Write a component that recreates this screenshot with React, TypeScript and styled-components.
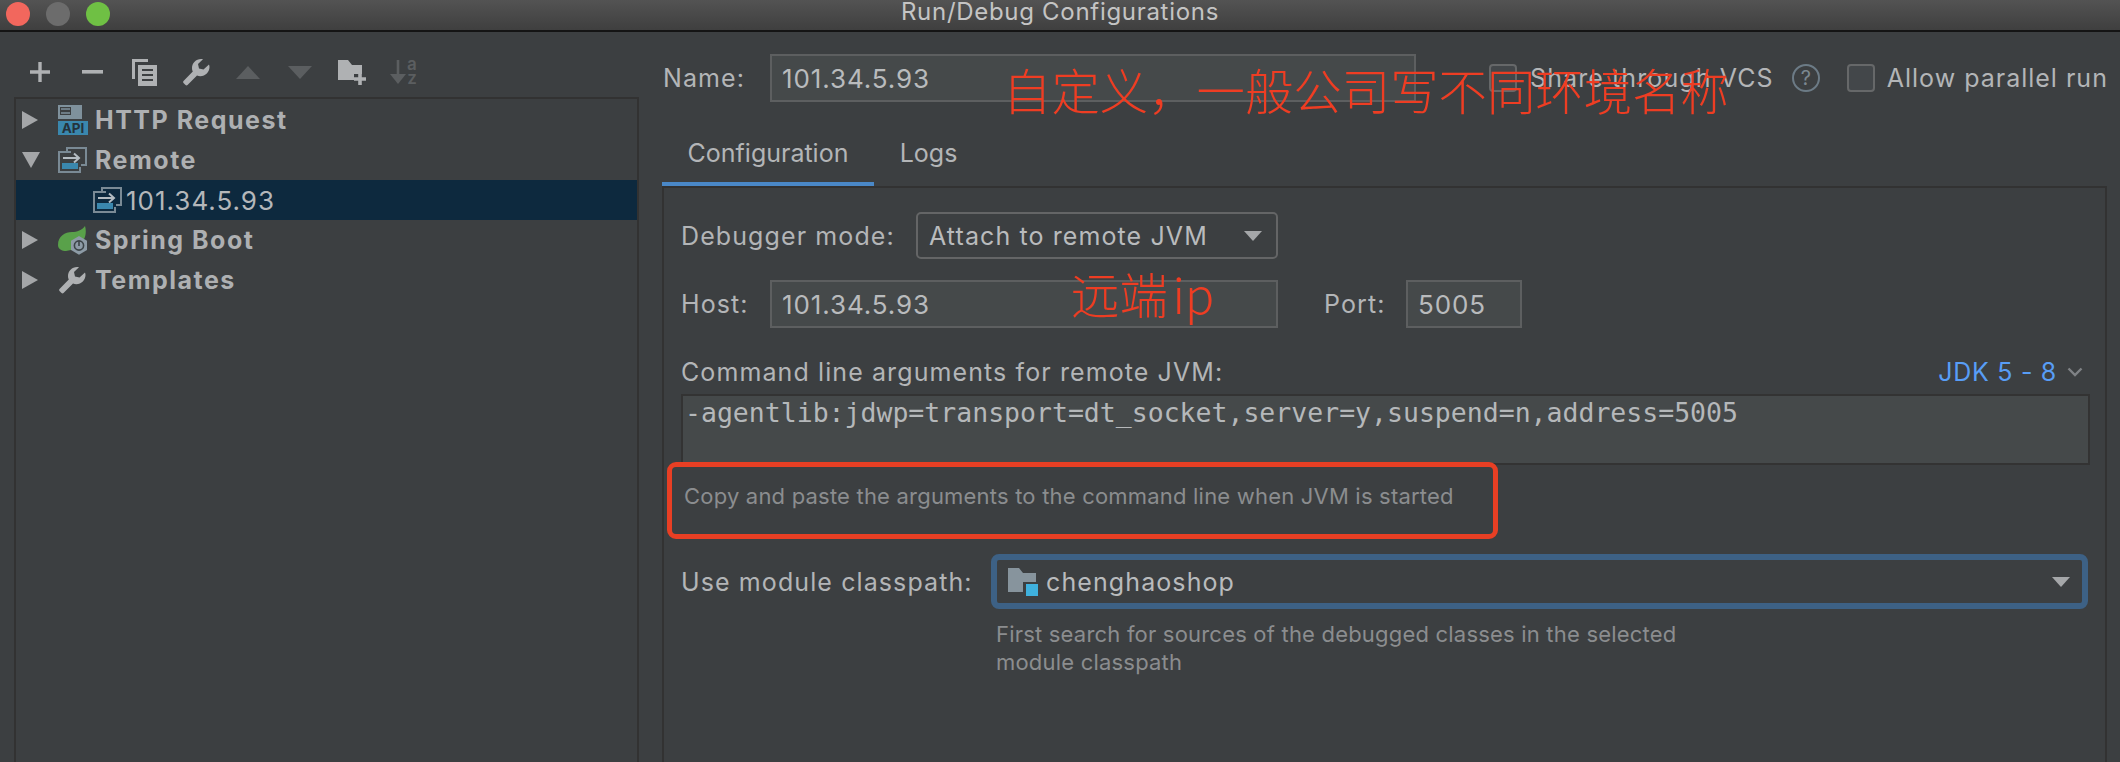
import React from "react";
import styled, { createGlobalStyle } from "styled-components";

const Global = createGlobalStyle`
  html, body { margin: 0; padding: 0; background: #3c3f41; }
  * { box-sizing: border-box; }
`;

const UI = `Inter, "Liberation Sans", "Noto Sans CJK SC", sans-serif`;
const CJK = `"Noto Sans CJK SC", Inter, sans-serif`;

const Window = styled.div`
  position: relative;
  width: 2120px;
  height: 762px;
  overflow: hidden;
  background: #3c3f41;
  font-family: ${UI};
  color: #b3b5b7;
  display: flex;
  flex-direction: column;
`;
const TitleBar = styled.header`
  height: 32px;
  flex: none;
  display: grid;
  grid-template-columns: 1fr auto 1fr;
  align-items: center;
  background: linear-gradient(#535353, #3f3f3f);
  border-bottom: 2px solid #141414;
  overflow: hidden;
`;
const Lights = styled.div`
  display: flex;
  gap: 16px;
  padding-left: 6px;
  margin-top: -2px;
`;
const Light = styled.span<{ $c: string }>`
  width: 24px;
  height: 24px;
  border-radius: 50%;
  background: ${(p) => p.$c};
`;
const Title = styled.h1`
  margin: -6px 0 0;
  font-size: 24px;
  line-height: 22px;
  letter-spacing: 0.7px;
  font-weight: 400;
  color: #c4c4c4;
  white-space: nowrap;
`;
const Body = styled.div`
  flex: 1;
  display: flex;
  min-height: 0;
`;
const Sidebar = styled.aside`
  width: 639px;
  flex: none;
  padding-left: 14px;
  display: flex;
  flex-direction: column;
`;
const Toolbar = styled.div`
  height: 65px;
  flex: none;
  display: flex;
  padding: 24px 0 0 0;
`;
const ToolSlot = styled.span`
  width: 52px;
  height: 32px;
  display: flex;
  align-items: center;
  justify-content: center;
  svg { display: block; overflow: visible; }
`;
const Tree = styled.div`
  flex: 1;
  border: 2px solid #323232;
  border-bottom: 0;
  padding-top: 1px;
`;
const Row = styled.div<{ $selected?: boolean; $leaf?: boolean }>`
  height: 40px;
  display: flex;
  align-items: center;
  padding-left: ${(p) => (p.$leaf ? "77px" : "6px")};
  background: ${(p) => (p.$selected ? "#0d293e" : "transparent")};
`;
const Caret = styled.span`
  width: 36px;
  display: flex;
  flex: none;
`;
const IconSlot = styled.span`
  width: 37px;
  flex: none;
  display: flex;
  svg { display: block; }
`;
const Group = styled.span`
  font-size: 25px;
  font-weight: 700;
  letter-spacing: 1.5px;
  color: #aeb0b2;
  white-space: nowrap;
`;
const Leaf = styled.span`
  font-size: 26px;
  margin-left: 4px;
  letter-spacing: 1px;
  color: #b4b7ba;
`;
const Main = styled.main`
  flex: 1;
  min-width: 0;
  padding: 22px 0 0 23px;
  display: flex;
  flex-direction: column;
`;
const NameRow = styled.div`
  display: flex;
  align-items: center;
  height: 48px;
  padding-left: 1px;
`;
const Label = styled.label<{ $w?: number; $ml?: number }>`
  font-size: 25px;
  white-space: nowrap;
  color: #b3b5b7;
  letter-spacing: 1.1px;
  ${(p) => (p.$w ? `width: ${p.$w}px; flex: none;` : "")}
  ${(p) => (p.$ml ? `margin-left: ${p.$ml}px;` : "")}
`;
const Field = styled.div<{ $w: number }>`
  width: ${(p) => p.$w}px;
  height: 48px;
  flex: none;
  background: #45494a;
  border: 2px solid #5d5f60;
  display: flex;
  align-items: center;
  padding-left: 10px;
  font-size: 26px;
  letter-spacing: 0.9px;
  color: #b9bbbd;
`;
const CheckBox = styled.span<{ $ml: number }>`
  width: 28px;
  height: 28px;
  flex: none;
  margin-left: ${(p) => p.$ml}px;
  border: 2px solid #666869;
  border-radius: 4px;
  background: #43474a;
`;
const CheckText = styled.span<{ $ml: number; $ls?: number }>`
  margin-left: ${(p) => p.$ml}px;
  font-size: 25px;
  letter-spacing: ${(p) => p.$ls ?? 1.1}px;
  color: #b3b5b7;
  white-space: nowrap;
`;
const Help = styled.span`
  width: 28px;
  height: 28px;
  flex: none;
  margin-left: 18px;
  border: 2px solid #6c7b86;
  border-radius: 50%;
  color: #7b8790;
  font-size: 20px;
  line-height: 24px;
  text-align: center;
`;
const TabBar = styled.div`
  margin-top: 32px;
  height: 54px;
  display: flex;
  flex: none;
`;
const Tab = styled.div<{ $active?: boolean; $w: number }>`
  width: ${(p) => p.$w}px;
  height: 54px;
  text-align: center;
  font-size: 25px;
  line-height: 38px;
  color: #b3b5b7;
  border-bottom: ${(p) => (p.$active ? "6px solid #4a88c7" : "0")};
`;
const Panel = styled.section`
  flex: 1;
  margin: -2px 13px 0 0;
  border: 2px solid #323232;
  border-bottom: 0;
  padding: 24px 0 0 17px;
  display: flex;
  flex-direction: column;
`;
const FormRow = styled.div<{ $mt?: number }>`
  display: flex;
  align-items: center;
  margin-top: ${(p) => p.$mt ?? 0}px;
  flex: none;
`;
const Combo = styled.div<{ $w: number }>`
  width: ${(p) => p.$w}px;
  height: 47px;
  flex: none;
  border: 2px solid #646566;
  border-radius: 5px;
  display: flex;
  align-items: center;
  padding: 0 14px 0 11px;
  font-size: 25px;
  letter-spacing: 1.1px;
  color: #b9bbbd;
  justify-content: space-between;
`;
const ComboArrow = styled.i`
  width: 0;
  height: 0;
  border-left: 9px solid transparent;
  border-right: 9px solid transparent;
  border-top: 10px solid #a5a7a9;
`;
const ArgsHead = styled.div`
  margin-top: 28px;
  display: flex;
  justify-content: space-between;
  align-items: center;
  height: 32px;
  padding-right: 22px;
  flex: none;
`;
const Jdk = styled.span`
  display: flex;
  align-items: center;
  gap: 10px;
  font-size: 25px;
  letter-spacing: 0.7px;
  color: #589df6;
`;
const Args = styled.div`
  margin-top: 6px;
  width: 1409px;
  height: 71px;
  flex: none;
  background: #45494a;
  border: 2px solid #333;
  padding: 0 0 0 2px;
  font-family: "DejaVu Sans Mono", "Liberation Mono", monospace;
  font-size: 26.5px;
  line-height: 34px;
  color: #b5b8ba;
  white-space: nowrap;
`;
const Hint = styled.p<{ $ml?: number; $mt: number }>`
  margin: ${(p) => p.$mt}px 0 0 ${(p) => p.$ml ?? 3}px;
  font-size: 22px;
  letter-spacing: 0.2px;
  line-height: 28px;
  color: #8b8d8f;
  width: ${(p) => (p.$ml ? "720px" : "auto")};
  flex: none;
`;
const FocusCombo = styled.div`
  width: 1097px;
  height: 55px;
  flex: none;
  margin-left: 20px;
  border: 6px solid #3d6185;
  border-radius: 8px;
  display: flex;
  align-items: center;
  padding: 0 12px 0 11px;
`;
const ComboText = styled.span`
  margin-left: 8px;
  font-size: 25px;
  letter-spacing: 1.1px;
  color: #b9bbbd;
  flex: 1;
`;
const RedNote = styled.div<{ $x: number; $y: number; $ws?: number }>`
  position: absolute;
  left: ${(p) => p.$x}px;
  top: ${(p) => p.$y}px;
  font-family: ${CJK};
  font-size: 48.4px;
  font-weight: 300;
  line-height: 60px;
  color: #ee3d23;
  white-space: nowrap;
  word-spacing: ${(p) => p.$ws ?? 0}px;
`;
const RedBox = styled.div`
  position: absolute;
  left: 667px;
  top: 462px;
  width: 831px;
  height: 77px;
  border: 5px solid #e83f24;
  border-radius: 9px;
`;

const Tri = ({ d, c, w, h }: { d: string; c: string; w: number; h: number }) => (
  <svg width={w} height={h} viewBox={`0 0 ${w} ${h}`}>
    <path d={d} fill={c} />
  </svg>
);

const wrench =
  "M19 1C14 1 10 5 10 10c0 1.5.3 2.5.8 3.6L1.5 23c-.5.6-.5 1.4 0 2l2 2c.6.5 1.5.5 2 0l9.5-9.5c1 .5 2.2.7 3.3.7 5.2 0 9.2-4.2 9.2-9.2 0-1-.2-1.8-.5-2.6l-5.5 5.1-4.5-1-1-4.5 5-4.8C20.4 1.05 19.7 1 19 1Z";

const Wrench = ({ s = 28, c = "#afb1b3" }: { s?: number; c?: string }) => (
  <svg width={s} height={s} viewBox="0 0 28 28">
    <path d={wrench} fill={c} />
  </svg>
);

const RemoteIcon = () => (
  <svg width="29" height="26" viewBox="0 0 29 26">
    <path d="M9 5V1h19v17h-5" fill="none" stroke="#7a8a95" strokeWidth="2" />
    <path d="M13 5H1v20h21v-5" fill="none" stroke="#7a8a95" strokeWidth="2" />
    <rect x="4" y="16" width="16" height="6" fill="#3a87ad" />
    <path d="M5 11h15M16 6.5l5 4.5-5 4.5" fill="none" stroke="#b4bcc2" strokeWidth="2" />
  </svg>
);

const ApiIcon = () => (
  <svg width="30" height="30" viewBox="0 0 30 30">
    <rect x="0" y="0" width="24" height="14" fill="#7f919c" />
    <path d="M2 2h11v8H2z" fill="#3c3f41" />
    <path d="M3 4h9M3 8h9" stroke="#7f919c" strokeWidth="1.6" />
    <rect x="0" y="16" width="30" height="14" fill="#3a87ad" />
    <text x="15" y="28" textAnchor="middle" fontFamily="Inter, sans-serif" fontWeight="700" fontSize="13.5" fill="#25323b">
      API
    </text>
  </svg>
);

const SpringIcon = () => (
  <svg width="30" height="29" viewBox="0 0 30 29">
    <path d="M0 19C0 10 7 6 14 6c5 0 10-2 13-6 2 7 0 13-3 16l-11 8-5 1C4 25 0 23 0 19Z" fill="#59a14a" />
    <path d="M21 10l8 4.7v9.3l-8 4.8-8-4.8v-9.3z" fill="#8d9ba6" />
    <circle cx="21" cy="19.5" r="4.6" fill="none" stroke="#3c4448" strokeWidth="1.6" />
    <path d="M21 15v5" stroke="#3c4448" strokeWidth="1.6" />
  </svg>
);

const ModuleFolder = () => (
  <svg width="30" height="28" viewBox="0 0 30 28">
    <path d="M0 0h11l4 5h13v19H0z" fill="#87949d" />
    <rect x="15" y="14" width="15" height="14" fill="#3c3f41" />
    <rect x="18" y="16" width="12" height="12" fill="#3fb1de" />
  </svg>
);

const tools = [
  <svg key="plus" width="22" height="22" viewBox="0 0 22 22">
    <path d="M11 1v20M1 11h20" stroke="#afb1b3" strokeWidth="3.4" />
  </svg>,
  <svg key="minus" width="21" height="4" viewBox="0 0 21 4">
    <rect width="21" height="3.6" fill="#afb1b3" />
  </svg>,
  <svg key="copy" width="25" height="27" viewBox="0 0 25 27">
    <path d="M0 0h16v3H3v17H0z" fill="#afb1b3" />
    <path d="M6 6h19v21H6z" fill="#afb1b3" />
    <path d="M10 11h11M10 16h11M10 21h11" stroke="#3c3f41" strokeWidth="2" />
  </svg>,
  <Wrench key="wrench" />,
  <Tri key="up" w={24} h={13} d="M12 0l12 13H0z" c="#5b5e60" />,
  <Tri key="down" w={24} h={13} d="M0 0h24L12 13z" c="#5b5e60" />,
  <svg key="folder" width="29" height="25" viewBox="0 0 29 25">
    <path d="M0 0h10l4 5h10v9h-8v6H0z" fill="#afb1b3" />
    <path d="M22 13v12M16 19h12" stroke="#afb1b3" strokeWidth="3.6" />
  </svg>,
  <svg key="sort" width="28" height="25" viewBox="0 0 28 25">
    <path d="M8 0v20" stroke="#5b5e60" strokeWidth="2.6" />
    <path d="M0 14h16L8 24z" fill="#5b5e60" />
    <text x="22" y="10" textAnchor="middle" fontFamily="Inter, sans-serif" fontWeight="600" fontSize="17" fill="#5b5e60">a</text>
    <text x="22" y="24" textAnchor="middle" fontFamily="Inter, sans-serif" fontWeight="600" fontSize="17" fill="#5b5e60">z</text>
  </svg>,
];

const Right = () => <Tri w={16} h={18} d="M0 0l16 9-16 9z" c="#a4a6a8" />;
const Down = () => <Tri w={18} h={16} d="M0 0h18L9 16z" c="#a4a6a8" />;

export default function App() {
  return (
    <Window>
      <Global />
      <TitleBar>
        <Lights>
          <Light $c="#f2675d" />
          <Light $c="#6c6c6c" />
          <Light $c="#6fc044" />
        </Lights>
        <Title>Run/Debug Configurations</Title>
        <span />
      </TitleBar>
      <Body>
        <Sidebar>
          <Toolbar>
            {tools.map((t, i) => (
              <ToolSlot key={i}>{t}</ToolSlot>
            ))}
          </Toolbar>
          <Tree>
            <Row>
              <Caret><Right /></Caret>
              <IconSlot><ApiIcon /></IconSlot>
              <Group>HTTP Request</Group>
            </Row>
            <Row>
              <Caret><Down /></Caret>
              <IconSlot><RemoteIcon /></IconSlot>
              <Group>Remote</Group>
            </Row>
            <Row $selected $leaf>
              <RemoteIcon />
              <Leaf>101.34.5.93</Leaf>
            </Row>
            <Row>
              <Caret><Right /></Caret>
              <IconSlot><SpringIcon /></IconSlot>
              <Group>Spring Boot</Group>
            </Row>
            <Row>
              <Caret><Right /></Caret>
              <IconSlot><Wrench /></IconSlot>
              <Group>Templates</Group>
            </Row>
          </Tree>
        </Sidebar>
        <Main>
          <NameRow>
            <Label $w={107}>Name:</Label>
            <Field $w={646}>101.34.5.93</Field>
            <CheckBox $ml={73} />
            <CheckText $ml={13}>Share through VCS</CheckText>
            <Help>?</Help>
            <CheckBox $ml={27} />
            <CheckText $ml={12} $ls={1}>Allow parallel run</CheckText>
          </NameRow>
          <TabBar>
            <Tab $active $w={212}>Configuration</Tab>
            <Tab $w={109}>Logs</Tab>
          </TabBar>
          <Panel>
            <FormRow>
              <Label $w={235}>Debugger mode:</Label>
              <Combo $w={362}>
                Attach to remote JVM
                <ComboArrow />
              </Combo>
            </FormRow>
            <FormRow $mt={21}>
              <Label $w={89}>Host:</Label>
              <Field $w={508}>101.34.5.93</Field>
              <Label $w={82} $ml={46}>Port:</Label>
              <Field $w={116}>5005</Field>
            </FormRow>
            <ArgsHead>
              <Label>Command line arguments for remote JVM:</Label>
              <Jdk>
                JDK 5 - 8
                <svg width="16" height="10" viewBox="0 0 16 10">
                  <path d="M1.5 1.5L8 8l6.5-6.5" fill="none" stroke="#7f8285" strokeWidth="2.4" />
                </svg>
              </Jdk>
            </ArgsHead>
            <Args>-agentlib:jdwp=transport=dt_socket,server=y,suspend=n,address=5005</Args>
            <Hint $mt={17}>Copy and paste the arguments to the command line when JVM is started</Hint>
            <FormRow $mt={44}>
              <Label $w={290}>Use module classpath:</Label>
              <FocusCombo>
                <ModuleFolder />
                <ComboText>chenghaoshop</ComboText>
                <ComboArrow />
              </FocusCombo>
            </FormRow>
            <Hint $ml={315} $mt={11}>
              First search for sources of the debugged classes in the selected module classpath
            </Hint>
          </Panel>
        </Main>
      </Body>
      <RedNote $x={1003} $y={59}>{"自定义\uFF0C一般公司写不同环境名称"}</RedNote>
      <RedNote $x={1071} $y={263} $ws={-6}>远端 ip</RedNote>
      <RedBox />
    </Window>
  );
}
